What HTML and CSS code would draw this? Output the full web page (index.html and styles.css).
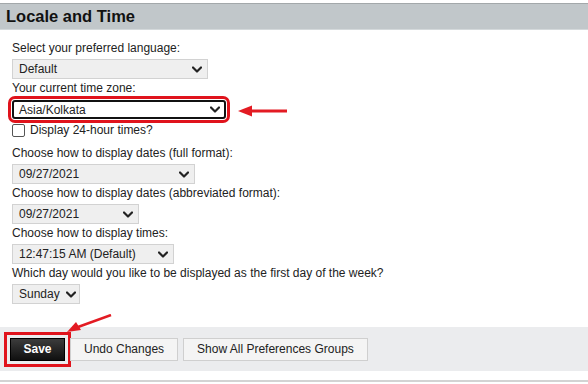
FILE: index.html
```html
<!DOCTYPE html>
<html>
<head>
<meta charset="utf-8">
<link rel="stylesheet" href="styles.css">
</head>
<body>
<div class="page">
  <div class="header">Locale and Time</div>
  <div class="form">
    <div class="label">Select your preferred language:</div>
    <div class="sel w196"><span>Default</span><svg viewBox="0 0 10 6"><path d="M1 1l4 4 4-4"/></svg></div>
    <div class="label">Your current time zone:</div>
    <div class="tzrow">
      <div class="sel tz w214"><span>Asia/Kolkata</span><svg viewBox="0 0 10 6"><path d="M1 1l4 4 4-4"/></svg></div>
    </div>
    <label class="check"><span class="box"></span>Display 24-hour times?</label>
    <div class="label">Choose how to display dates (full format):</div>
    <div class="sel w183"><span>09/27/2021</span><svg viewBox="0 0 10 6"><path d="M1 1l4 4 4-4"/></svg></div>
    <div class="label">Choose how to display dates (abbreviated format):</div>
    <div class="sel w127"><span>09/27/2021</span><svg viewBox="0 0 10 6"><path d="M1 1l4 4 4-4"/></svg></div>
    <div class="label">Choose how to display times:</div>
    <div class="sel w162"><span>12:47:15 AM (Default)</span><svg viewBox="0 0 10 6"><path d="M1 1l4 4 4-4"/></svg></div>
    <div class="label">Which day would you like to be displayed as the first day of the week?</div>
    <div class="sel w68"><span>Sunday</span><svg viewBox="0 0 10 6"><path d="M1 1l4 4 4-4"/></svg></div>
  </div>
  <div class="bar">
    <button class="btn save">Save</button>
    <button class="btn">Undo Changes</button>
    <button class="btn">Show All Preferences Groups</button>
  </div>
  <div class="rule"></div>
  <svg class="arrow arrow1" width="50" height="14" viewBox="0 0 50 14"><path d="M49 7H12" stroke="#e31b23" stroke-width="3"/><path d="M0 7L14 1.5V12.5Z" fill="#e31b23"/></svg>
  <svg class="arrow arrow2" width="46" height="20" viewBox="0 0 46 20"><path d="M45 1L12 13" stroke="#e31b23" stroke-width="2.5"/><path d="M1 18L10 8L15 16Z" fill="#e31b23"/></svg>
</div>
</body>
</html>
```
FILE: styles.css
```css
* { box-sizing: border-box; }
html, body { margin: 0; padding: 0; background: #fff; }
body { font-family: "Liberation Sans", Arial, sans-serif; font-size: 12px; color: #222; }
.page { position: relative; width: 588px; height: 384px; padding-top: 3px; overflow: hidden; }
.header {
  height: 27px;
  background: #c1c7ca;
  border-top: 1px solid #a3a8aa;
  border-bottom: 1px solid #d4d9db;
  font-size: 16.5px;
  font-weight: bold;
  color: #111;
  padding-left: 6px;
  line-height: 24px;
}
.form { padding: 10px 0 0 12px; display: flex; flex-direction: column; align-items: flex-start; }
.label { line-height: 16px; height: 16px; margin-bottom: 3px; }
.sel {
  height: 20px;
  display: flex;
  align-items: center;
  justify-content: space-between;
  gap: 6px;
  background: #efefef;
  border: 1px solid #d2d2d2;
  padding: 0 5px 0 6px;
  margin-bottom: 1px;
  color: #222;
}
.sel svg { width: 10px; height: 7px; flex: none; fill: none; stroke: #222; stroke-width: 2.2; stroke-linecap: round; stroke-linejoin: round; }
.w196 { width: 196px; }
.w214 { width: 214px; }
.w183 { width: 183px; }
.w127 { width: 127px; }
.w162 { width: 162px; }
.w68 { width: 68px; }
.tzrow { margin-top: 1px; margin-bottom: 1px; }
.sel.tz {
  height: 19px;
  background: #fff;
  border: 2px solid #111;
  border-radius: 3px;
  padding-left: 5px;
  padding-right: 4px;
  outline: 3px solid #e0131c;
  outline-offset: 1px;
}
.check { display: flex; align-items: center; height: 18px; margin-bottom: 6px; }
.box { width: 13px; height: 13px; border: 1px solid #555; border-radius: 2px; background: #fff; margin-right: 5px; }
.bar {
  margin-top: 22px;
  height: 44px;
  background: #ebecee;
  display: flex;
  align-items: center;
  gap: 5px;
  padding-left: 10px;
}
.btn {
  height: 23px;
  font-family: "Liberation Sans", Arial, sans-serif;
  font-size: 12px;
  color: #222;
  background: #f4f4f4;
  border: 1px solid #cfcfcf;
  padding: 0 13px;
  margin: 0;
}
.btn.save {
  width: 55px;
  padding: 0;
  background: linear-gradient(#3c3c3c, #101010);
  border: 1px solid #000;
  color: #fff;
  font-weight: bold;
  outline: 3px solid #e0131c;
  outline-offset: 3px;
}
.rule { margin-top: 9px; height: 2px; background: #d3d3d3; }
.arrow { position: absolute; }
.arrow1 { left: 238px; top: 104px; }
.arrow2 { left: 66px; top: 314px; }
```
